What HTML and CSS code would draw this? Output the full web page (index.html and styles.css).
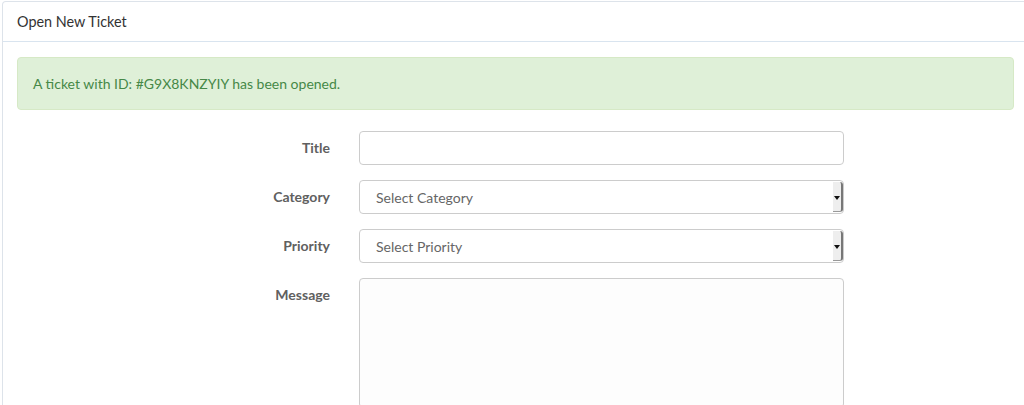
FILE: index.html
```html
<!DOCTYPE html>
<html>
<head>
<meta charset="utf-8">
<link rel="stylesheet" href="styles.css">
</head>
<body>
<div class="panel">
  <div class="panel-heading">Open New Ticket</div>
  <div class="panel-body">
    <div class="alert">A ticket with ID: #G9X8KNZYIY has been opened.</div>
    <form class="form">
      <div class="form-group">
        <label class="label">Title</label>
        <div class="field"><input class="control" type="text"></div>
      </div>
      <div class="form-group">
        <label class="label">Category</label>
        <div class="field select-wrap">
          <select class="control select"><option>Select Category</option></select>
          <span class="arrow"><span class="tri"></span></span>
        </div>
      </div>
      <div class="form-group">
        <label class="label">Priority</label>
        <div class="field select-wrap">
          <select class="control select"><option>Select Priority</option></select>
          <span class="arrow"><span class="tri"></span></span>
        </div>
      </div>
      <div class="form-group">
        <label class="label">Message</label>
        <div class="field"><textarea class="control area"></textarea></div>
      </div>
    </form>
  </div>
</div>
</body>
</html>
```
FILE: styles.css
```css
html, body {
  margin: 0;
  padding: 0;
  background: #fff;
  overflow: hidden;
  width: 1024px;
  height: 405px;
}
body {
  font-family: Lato, "Open Sans", "Liberation Sans", sans-serif;
  font-size: 14px;
  color: #333;
}
.panel {
  margin: 1px 0 0 2px;
  width: 1030px;
  height: 420px;
  box-sizing: border-box;
  border: 1px solid #dde3ea;
  border-bottom: 0;
  border-radius: 4px 4px 0 0;
  background: #fff;
  overflow: hidden;
}
.panel-heading {
  height: 40px;
  box-sizing: border-box;
  padding: 11px 14px 0;
  font-size: 14.4px;
  color: #333;
  border-bottom: 1px solid #d9e4ef;
  line-height: 18px;
}
.panel-body {
  padding: 15px 15px 0 14px;
  width: 997px;
}
.alert {
  height: 53px;
  box-sizing: border-box;
  padding: 0 15px;
  display: flex;
  align-items: center;
  background: #dff0d8;
  border: 1px solid #d6e9c6;
  border-radius: 4px;
  color: #468847;
  font-size: 14px;
}
.form {
  margin-top: 21px;
}
.form-group {
  display: flex;
  align-items: flex-start;
  margin-bottom: 15px;
}
.label {
  width: 313px;
  text-align: right;
  font-weight: bold;
  color: #606060;
  padding-top: 8px;
  line-height: 18px;
  font-size: 14px;
}
.field {
  margin-left: 29px;
  width: 485px;
  position: relative;
}
.control {
  display: block;
  width: 485px;
  height: 34px;
  box-sizing: border-box;
  border: 1px solid #ccc;
  border-radius: 4px;
  background: #fff;
  padding: 0 16px;
  font-family: inherit;
  font-size: 14px;
  color: #555;
  margin: 0;
  outline: none;
}
.select {
  -webkit-appearance: none;
  appearance: none;
  color: #666;
}
.arrow {
  position: absolute;
  right: 1px;
  top: 2px;
  width: 10px;
  height: 30px;
  background: #eeeeee;
  border-right: 2px solid #777;
  border-bottom: 1px solid #999;
  border-radius: 0 3px 3px 0;
  box-sizing: border-box;
}
.tri {
  position: absolute;
  left: 1px;
  top: 14px;
  width: 0;
  height: 0;
  border-left: 3px solid transparent;
  border-right: 3px solid transparent;
  border-top: 4px solid #111;
}
.area {
  height: 130px;
  resize: none;
  background: #fdfdfd;
}
```
